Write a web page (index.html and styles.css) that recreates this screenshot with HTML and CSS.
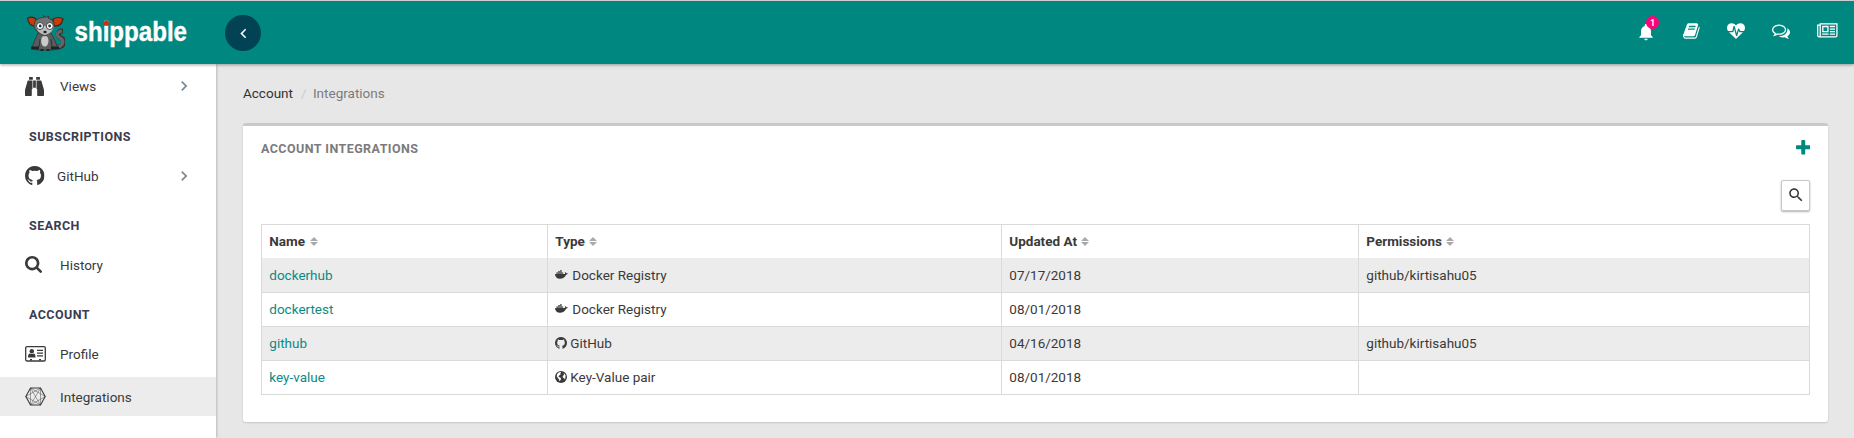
FILE: index.html
```html
<!DOCTYPE html>
<html lang="en">
<head>
<meta charset="utf-8">
<title>Shippable - Integrations</title>
<link rel="stylesheet" href="styles.css">
</head>
<body>
<svg class="defs" width="0" height="0" aria-hidden="true">
  <symbol id="github" viewBox="128 128 1536 1536"><path d="M896 128q209 0 385.500 103t279.500 279.500 103 385.500q0 251-146.500 451.500t-378.500 277.500q-27 5-40-7t-13-30q0-3 .5-76.500t.5-134.500q0-97-52-142 57-6 102.500-18t94-39 81-66.500 53-105 20.500-150.500q0-119-79-206 37-91-8-204-28-9-81 11t-92 44l-38 24q-93-26-192-26t-192 26q-16-11-42.500-27t-83.500-38.500-85-13.500q-45 113-8 204-79 87-79 206 0 85 20.500 150t52.500 105 80.500 67 94 39 102.500 18q-39 36-49 103-21 10-45 15t-57 5-65.500-21.500-55.500-62.500q-19-32-48.500-52t-49.500-24l-20-3q-21 0-29 4.500t-5 11.500 9 14 13 12l7 5q22 10 43.500 38t31.500 51l10 23q13 38 44 61.500t67 30 69.500 7 55.500-3.500l23-4q0 38 .5 88.500t.5 54.500q0 18-13 30t-40 7q-232-77-378.500-277.500t-146.500-451.500q0-209 103-385.500t279.500-279.500 385.500-103z"/></symbol>
  <symbol id="chevron" viewBox="0 0 24 24"><path d="M10 6L8.590 7.410 13.170 12l-4.580 4.590L10 18l6-6z"/></symbol>
  <symbol id="docker" viewBox="0 0 13 9"><path d="M0 4h10q-.3-1.300.5-2.100.9.600 1 1.500.8-.2 1.500.2-.5 1.100-1.900 1.200Q9.300 8.700 5 8.700.3 8.700 0 4z"/><path opacity=".7" d="M1.300 2.300h6.900v1.700H1.300zM3 .9h3.800v1.400H3zM5 0h1.800v.9H5z"/></symbol>
</svg>

<header class="topbar">
  <div class="brand">
    <svg class="mascot" viewBox="0 0 38 37">
      <path d="M31 32c7-1 7-7 3-9s-4-7 2-7" fill="none" stroke="#333" stroke-width="5"/>
      <path d="M30 32c7-1 7-7 3-9s-4-6 2-7" fill="none" stroke="#626466" stroke-width="3.200"/>
      <path d="M11 18Q7 26 5 33L10 35H26L31 33Q28 25 24 18z" fill="#595b5d" stroke="#333" stroke-width=".8"/>
      <ellipse cx="17.800" cy="26" rx="3.700" ry="5.500" fill="#c9cacb"/>
      <path d="M1 3Q5 1 9 4L9 11Q2 12 .5 3zM36 4Q32 1 26 4L27 11Q34 12 36 4z" fill="#c93b08" stroke="#382622" stroke-width="1.200"/>
      <path d="M8 6Q12 2 17 2.500L16 .5 19 2.500 22 1 21 3Q26 4 27 8 28 15 18 21 8 17 7 11z" fill="#717375" stroke="#333" stroke-width=".8"/>
      <path d="M9 11Q13 8 18 11 23 8 27 11 26 18 18 20 10 18 9 11z" fill="#b9bbbc"/>
      <circle cx="13" cy="11" r="3.500" fill="#fff" stroke="#444"/><circle cx="22.800" cy="11" r="3.500" fill="#fff" stroke="#444"/>
      <circle cx="13.200" cy="11" r="1.400" fill="#18343c"/><circle cx="22.600" cy="11" r="1.400" fill="#18343c"/>
      <ellipse cx="18" cy="17" rx="1.700" ry="1.300" fill="#222"/>
      <path d="M4 33h8M24 33h8M15 34v2M21 34v2" stroke="#202224" stroke-width="3"/>
      <path d="M13 24l-1 8M24 24l1 8" stroke="#333" fill="none"/>
    </svg>
    <svg class="wordmark" viewBox="0 0 116 38"><text x="0.500" y="28.300" textLength="112.500" lengthAdjust="spacingAndGlyphs">shippable</text><circle cx="32.300" cy="10" r="2.500"/></svg>
  </div>
  <button class="collapse" aria-label="Collapse"><svg viewBox="0 0 24 24"><path d="M15.410 7.410L14 6l-6 6 6 6 1.410-1.410L10.830 12z"/></svg></button>
  <nav class="tools">
    <span class="bell"><svg viewBox="0 0 24 24"><path d="M12 22c1.100 0 2-.9 2-2h-4c0 1.100.89 2 2 2zm6-6v-5c0-3.070-1.640-5.640-4.500-6.320V4c0-.83-.67-1.500-1.500-1.500s-1.500.67-1.500 1.500v.68C7.630 5.360 6 7.920 6 11v5l-2 2v1h16v-1l-2-2z"/></svg><b class="badge">1</b></span>
    <svg class="book" viewBox="0 0 1664 1792"><path transform="translate(0 1536) scale(1 -1)" d="M1639 1058q40 -57 18 -129l-275 -906q-19 -64 -76.500 -107.500t-122.500 -43.500h-923q-77 0 -148.500 53.500t-99.500 131.500q-24 67 -2 127q0 4 3 27t4 37q1 8 -3 21.500t-3 19.500q2 11 8 21t16.500 23.500t16.500 23.500q23 38 45 91.500t30 91.500q3 10 0.500 30t-0.500 28q3 11 17 28t17 23q21 36 42 92t25 90q1 9 -2.500 32t0.500 28q4 13 22 30.500t22 22.500q19 26 42.500 84.500t27.500 96.500q1 8 -3 25.500t-2 26.500q2 8 9 18t18 23t17 21q8 12 16.500 30.500t15 35t16 36t19.500 32t26.500 23.500t36 11.500t47.500 -5.500l-1 -3q38 9 51 9h761q74 0 114 -56t18 -130l-274 -906q-36 -119 -71.500 -153.500t-128.500 -34.500h-869q-27 0 -38 -15q-11 -16 -1 -43q24 -70 144 -70h923q29 0 56 15.500t35 41.500l300 987q7 22 5 57q38 -15 59 -43zM575 1056q-4 -13 2 -22.500t20 -9.500h608q13 0 25.500 9.500t16.500 22.500l21 64q4 13 -2 22.500t-20 9.500h-608q-13 0 -25.500 -9.500t-16.500 -22.500zM492 800q-4 -13 2 -22.500t20 -9.500h608q13 0 25.500 9.500t16.500 22.500l21 64q4 13 -2 22.500t-20 9.500h-608q-13 0 -25.500 -9.500t-16.500 -22.500z"/></svg>
    <svg class="heart" viewBox="0 0 1792 1792"><path transform="translate(0 1536) scale(1 -1)" d="M1280 512h305q-5 -6 -10 -10.500t-9 -7.500l-3 -4l-623 -600q-18 -18 -44 -18t-44 18l-624 602q-5 2 -21 20h369q22 0 39.500 13.500t22.500 34.500l70 281l190 -667q6 -20 23 -33t39 -13q21 0 38 13t23 33l146 485l56 -112q18 -35 57 -35zM1792 940q0 -145 -103 -300h-369l-111 221q-8 17 -25.500 27t-36.500 8q-45 -5 -56 -46l-129 -430l-196 686q-6 20 -23.500 33t-39.500 13t-39 -13.500t-22 -34.500l-116 -464h-423q-103 155 -103 300q0 220 127 344t351 124q62 0 126.500 -21.500t120 -58t95.500 -68.500t76 -68q36 36 76 68t95.500 68.500t120 58t126.500 21.500q224 0 351 -124t127 -344z"/></svg>
    <svg class="chat" viewBox="0 0 1792 1792"><path transform="translate(0 1536) scale(1 -1)" d="M704 1152q-153 0 -286 -52t-211.500 -141t-78.500 -191q0 -82 53 -158t149 -132l97 -56l-35 -84q34 20 62 39l44 31l53 -10q78 -14 153 -14q153 0 286 52t211.500 141t78.500 191t-78.500 191t-211.500 141t-286 52zM704 1280q191 0 353.500 -68.500t256.500 -186.500t94 -257t-94 -257t-256.500 -186.500t-353.500 -68.500q-86 0 -176 16q-124 -88 -278 -128q-36 -9 -86 -16h-3q-11 0 -20.500 8t-11.500 21q-1 3 -1 6.500t0.500 6.500t2 6l2.500 5t3.500 5.500t4 5t4.500 5t4 4.500q5 6 23 25t26 29.500t22.500 29t25 38.500t20.500 44q-124 72 -195 177t-71 224q0 139 94 257t256.500 186.500t353.500 68.500zM1526 111q10 -24 20.500 -44t25 -38.500t22.500 -29t26 -29.500t23 -25q1 -1 4 -4.500t4.500 -5t4 -5t3.500 -5.500l2.500 -5t2 -6t0.500 -6.500t-1 -6.500q-3 -14 -13 -22t-22 -7q-50 7 -86 16q-154 40 -278 128q-90 -16 -176 -16q-271 0 -472 132q58 -4 88 -4q161 0 309 45t264 129q125 92 192 212t67 254q0 77 -23 152q129 -71 204 -178t75 -230q0 -120 -71 -224.500t-195 -176.500z"/></svg>
    <svg class="news" viewBox="0 0 2048 1792"><path transform="translate(0 1536) scale(1 -1)" d="M1024 1024h-384v-384h384v384zM1152 384v-128h-640v128h640zM1152 1152v-640h-640v640h640zM1792 384v-128h-512v128h512zM1792 640v-128h-512v128h512zM1792 896v-128h-512v128h512zM1792 1152v-128h-512v128h512zM256 192v960h-128v-960q0 -26 19 -45t45 -19t45 19t19 45zM1920 192v1088h-1536v-1088q0 -33 -11 -64h1483q26 0 45 19t19 45zM2048 1408v-1216q0 -80 -56 -136t-136 -56h-1664q-80 0 -136 56t-56 136v1088h256v128h1792z"/></svg>
  </nav>
</header>

<div class="layout">
  <aside class="sidebar">
    <a class="item first"><span class="icon"><svg width="19" height="19" viewBox="0 0 1792 1792"><path transform="translate(0 1536) scale(1 -1)" d="M704 1216v-768q0 -26 -19 -45t-45 -19v-576q0 -26 -19 -45t-45 -19h-512q-26 0 -45 19t-19 45v512l249 873q7 23 31 23h424zM1024 1216v-704h-256v704h256zM1792 320v-512q0 -26 -19 -45t-45 -19h-512q-26 0 -45 19t-19 45v576q-26 0 -45 19t-19 45v768h424q24 0 31 -23zM736 1504v-224h-352v224q0 14 9 23t23 9h288q14 0 23 -9t9 -23zM1408 1504v-224h-352v224q0 14 9 23t23 9h288q14 0 23 -9t9 -23z"/></svg></span>Views<svg class="chev"><use href="#chevron"/></svg></a>
    <h2>Subscriptions</h2>
    <a class="item git"><span class="icon"><svg width="19.500" height="19.500"><use href="#github"/></svg></span>GitHub<svg class="chev"><use href="#chevron"/></svg></a>
    <h2>Search</h2>
    <a class="item"><span class="icon"><svg width="17" height="17" viewBox="64 128 1664 1664"><path d="M1216 832q0-185-131.500-316.500t-316.500-131.500-316.500 131.500-131.500 316.500 131.500 316.500 316.500 131.500 316.500-131.500 131.500-316.500zm512 832q0 52-38 90t-90 38q-54 0-90-38l-343-342q-179 124-399 124-143 0-273.500-55.500t-225-150-150-225-55.500-273.500 55.500-273.500 150-225 225-150 273.500-55.500 273.500 55.500 225 150 150 225 55.500 273.500q0 220-124 399l343 343q37 37 37 90z"/></svg></span>History</a>
    <h2>Account</h2>
    <a class="item"><span class="icon"><svg width="21" height="16" viewBox="0 0 21 16"><rect x=".7" y=".7" width="19.600" height="14.300" rx="1.300" fill="none" stroke="currentColor" stroke-width="1.300"/><circle cx="6.800" cy="5.200" r="2.200"/><path d="M3 11.500Q2.800 7.600 5 7.400 6.800 8.800 8.600 7.400 10.700 7.600 10.500 11.500zM12 3.800h6v1.300h-6zM12 6.500h6v1.300h-6zM12 9.200h6v1.300h-6zM5 13h2v1.500H5zM14 13h2v1.500h-2z"/></svg></span>Profile</a>
    <a class="item active"><span class="icon"><svg width="21" height="19" viewBox="0 0 21 19"><g fill="none" stroke="currentColor"><path stroke-width="1.100" d="M5.500 1h10l4.700 8.500-4.700 8.500h-10L.8 9.500z"/><path stroke-width=".45" d="M5.500 1l10 17M15.500 1l-10 17M5.500 1v17M15.500 1v17M.8 9.500L15.500 1M.8 9.500L15.500 18M20.200 9.500L5.500 1M20.200 9.500L5.500 18"/></g></svg></span>Integrations</a>
  </aside>

  <main class="content">
    <div class="crumbs"><a>Account</a><span class="slash">/</span><span>Integrations</span></div>
    <section class="panel">
      <div class="panel-head">
        <h1>Account Integrations</h1>
        <svg class="plus" viewBox="192 128 1408 1408"><path d="M1600 736v192q0 40-28 68t-68 28h-416v416q0 40-28 68t-68 28h-192q-40 0-68-28t-28-68v-416h-416q-40 0-68-28t-28-68v-192q0-40 28-68t68-28h416v-416q0-40 28-68t68-28h192q40 0 68 28t28 68v416h416q40 0 68 28t28 68z"/></svg>
      </div>
      <button class="search" aria-label="Search"><svg viewBox="0 0 24 24"><path d="M15.500 14h-.79l-.28-.27C15.410 12.590 16 11.110 16 9.500 16 5.910 13.090 3 9.500 3S3 5.910 3 9.500 5.910 16 9.500 16c1.610 0 3.090-.59 4.230-1.570l.27.28v.79l5 4.990L20.490 19l-4.990-5zm-6 0C7.010 14 5 11.990 5 9.500S7.010 5 9.500 5 14 7.010 14 9.500 11.990 14 9.500 14z"/></svg></button>
      <table>
        <colgroup><col class="c-name"><col class="c-type"><col class="c-date"><col></colgroup>
        <thead><tr><th>Name<i class="sort"></i></th><th>Type<i class="sort"></i></th><th>Updated At<i class="sort"></i></th><th>Permissions<i class="sort"></i></th></tr></thead>
        <tbody>
          <tr><td><a>dockerhub</a></td><td><svg class="t-docker"><use href="#docker"/></svg>Docker Registry</td><td>07/17/2018</td><td>github/kirtisahu05</td></tr>
          <tr><td><a>dockertest</a></td><td><svg class="t-docker"><use href="#docker"/></svg>Docker Registry</td><td>08/01/2018</td><td></td></tr>
          <tr><td><a>github</a></td><td><svg class="t-icon"><use href="#github"/></svg>GitHub</td><td>04/16/2018</td><td>github/kirtisahu05</td></tr>
          <tr><td><a>key-value</a></td><td><svg class="t-icon" viewBox="0 0 12 12"><circle cx="6" cy="6" r="6"/><path fill="#fff" d="M3.600 1.500Q5 .9 6.200 1.200L5.300 2.200 5.800 3 4.600 4.200 3.500 5l.3 1 1.400.5.9 1.200L5.400 9.300l-.8 1L4 8.500 2.900 7 1.700 5.200 2.100 3.200zM8.500 2.300l1.500 1 .8 1.700-.6.9.4 1L9.700 8.600 9.200 7.200 7.900 6.500 7.700 5.300 8.600 4.300 9.100 3.700z"/></svg>Key-Value pair</td><td>08/01/2018</td><td></td></tr>
        </tbody>
      </table>
    </section>
  </main>
</div>
</body>
</html>
```

FILE: styles.css
```css
* { box-sizing: border-box; }
body {
  margin: 0;
  height: 438px;
  overflow: hidden;
  display: flex;
  flex-direction: column;
  background: #e7e7e7;
  color: #3a3a3a;
  font: 13.500px/20px Roboto, "Liberation Sans", sans-serif;
}
svg { display: block; fill: currentColor; flex: none; }
.defs { position: absolute; }
h1, h2 { margin: 0; font-size: 12.500px; font-weight: 700; text-transform: uppercase; letter-spacing: .45px; }
button { padding: 0; border: 0; display: flex; align-items: center; justify-content: center; }

.topbar {
  flex: none;
  position: relative;
  z-index: 2;
  height: 64px;
  padding: 0 16.500px 0 27px;
  border-top: 1px solid #ccc;
  background: #008880;
  box-shadow: 0 1px 3px rgba(0, 0, 0, .35);
  color: #fff;
  display: flex;
  align-items: flex-start;
}
.brand { display: flex; width: 198px; padding-top: 14px; }
.mascot { width: 38px; height: 37px; }
.wordmark { width: 116px; height: 38px; margin: -2px 0 0 9px; overflow: visible; }
.wordmark text { font: 700 27px/1 "Liberation Sans", sans-serif; stroke: #fff; stroke-width: .4px; stroke-linejoin: round; }
.wordmark circle { fill: #d32b0d; }
.collapse { width: 36px; height: 36px; margin-top: 14px; border-radius: 50%; background: #014354; color: #fff; }
.collapse svg { width: 19px; height: 19px; }
.tools { margin-left: auto; padding-top: 21px; display: flex; gap: 27px; }
.tools svg { height: 18px; }
.bell { position: relative; }
.tools .bell svg { width: 20px; height: 20px; }
.badge {
  position: absolute; left: 10px; top: -6px;
  width: 13px; height: 13px; border-radius: 50%;
  background: #fc0378; font-size: 8.500px; line-height: 14px; text-align: center;
}
.tools .book { width: 16.700px; }
.tools .heart, .tools .chat { width: 18px; }
.tools .news { width: 20.600px; }

.layout { flex: 1; display: flex; min-height: 0; }
.sidebar { width: 216px; padding-top: 3px; background: #fff; box-shadow: 0 0 3px rgba(0, 0, 0, .35); }
.sidebar h2 { height: 46px; padding: 17px 0 0 29px; color: #3b3c50; }
.item { height: 39px; margin-bottom: 4px; padding: 1px 22px 0 25px; display: flex; align-items: center; }
.item .icon { width: 35px; margin-top: -1px; }
.item.first { padding-top: 0; padding-bottom: 1px; }
.item.first .icon { margin-top: 0; }
.item.git .icon { width: 32px; }
.item.active { background: #ececec; }
.chev { width: 20px; height: 20px; margin-left: auto; color: #7b8891; }

.content { flex: 1; padding: 19px 26px 0 27px; }
.crumbs { height: 20px; display: flex; color: #7b7b7b; }
.crumbs a { color: #333; }
.slash { width: 20px; padding-left: 8px; color: #ccc; }
.panel {
  height: 299px; margin-top: 20px; padding: 14px 18px 0;
  border-top: 3px solid #c9c9c9; border-radius: 3px;
  background: #fff; box-shadow: 0 1px 2px rgba(0, 0, 0, .15);
}
.panel-head { height: 40px; display: flex; justify-content: space-between; }
.panel-head h1 { color: #7b7b7b; line-height: 18px; }
.plus { width: 14.500px; height: 14.500px; color: #008880; }
.search {
  width: 29px; height: 31px; margin-left: auto; padding-bottom: 1px;
  border: 1px solid #c8c8c8; border-radius: 2px; background: #fff; color: #333;
  box-shadow: 0 1px 2px rgba(0, 0, 0, .3);
}
.search svg { width: 18px; height: 18px; }

table { width: 100%; margin-top: 13px; table-layout: fixed; border-spacing: 0; border-left: 1px solid #dadada; }
.c-name { width: 286px; }
.c-type { width: 454px; }
.c-date { width: 357px; }
th, td { height: 34px; padding: 0 7.300px 1px; border-right: 1px solid #dadada; border-bottom: 1px solid #dadada; text-align: left; line-height: 20px; }
th { border-top: 1px solid #dadada; border-bottom: 0; font-weight: 700; padding-bottom: 2px; }
tbody tr:first-child td { height: 35px; }
tbody tr:nth-child(odd) { background: #ececec; }
td a { color: #0c8a84; }
td svg { display: inline-block; vertical-align: -1px; }
.t-docker { width: 13px; height: 9px; margin-right: 4px; vertical-align: 1px; }
.t-icon { width: 12px; height: 12px; margin-right: 3px; }
.sort { display: inline-block; margin-left: 4.500px; vertical-align: -.5px; line-height: 0; }
.sort::before, .sort::after { content: ""; display: block; border: 4px solid transparent; }
.sort::before { border-top: 0; border-bottom-color: #aaa; margin-bottom: 1.500px; }
.sort::after { border-bottom: 0; border-top-color: #aaa; }
```
